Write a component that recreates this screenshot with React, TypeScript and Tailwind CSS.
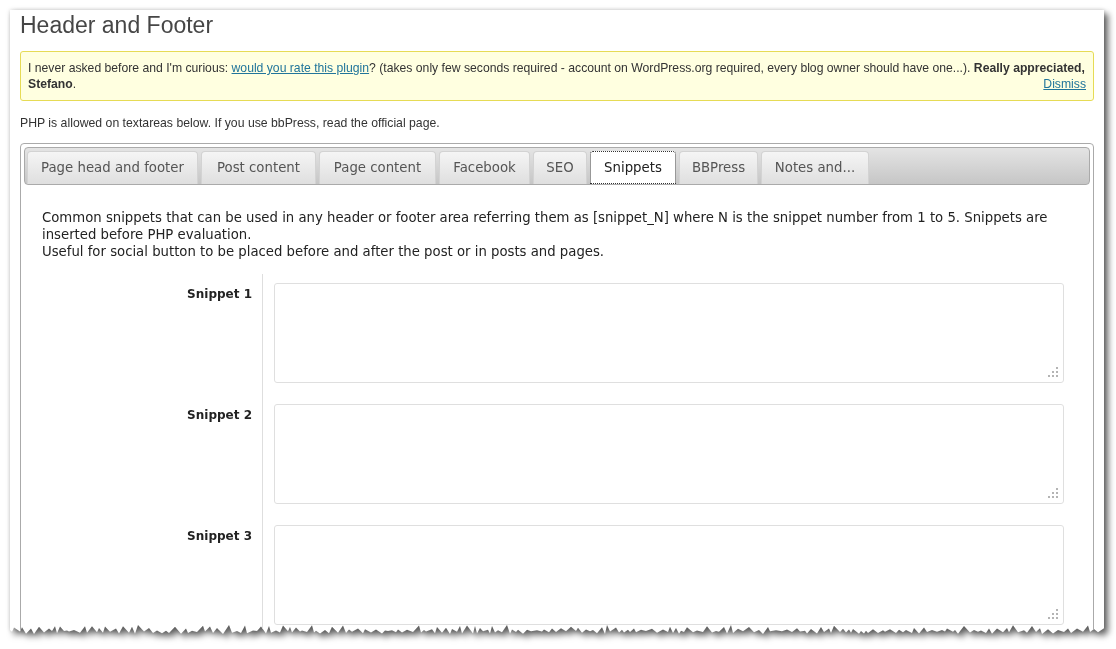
import React from "react";

const tabs = [
  { label: "Page head and footer", w: "w-[171px]" },
  { label: "Post content", w: "w-[115px]" },
  { label: "Page content", w: "w-[117px]" },
  { label: "Facebook", w: "w-[91px]" },
  { label: "SEO", w: "w-[54px]" },
  { label: "Snippets", w: "w-[86px]", active: true },
  { label: "BBPress", w: "w-[79px]" },
  { label: "Notes and...", w: "w-[108px]" },
];

// torn paper bottom edge, generated once
const PAPER_H = 624;
const tornEdge = (() => {
  let seed = 23;
  const rnd = () => {
    seed = (seed * 9301 + 49297) % 233280;
    return seed / 233280;
  };
  const pts: string[] = ["0 0", "100% 0", `100% ${PAPER_H - 6}px`];
  let x = 1094;
  let up = true;
  while (x > 0) {
    const big = rnd() > 0.6;
    const y = up
      ? PAPER_H - (big ? 6 : 3) - rnd() * 3
      : PAPER_H - rnd() * 3;
    pts.push(`${x}px ${y.toFixed(1)}px`);
    x -= 2 + Math.floor(rnd() * 5);
    up = !up;
  }
  pts.push(`0 ${PAPER_H - 4}px`);
  return `polygon(${pts.join(",")})`;
})();

function Grip() {
  return (
    <svg
      className="absolute right-[5px] bottom-[5px]"
      width="12"
      height="12"
      viewBox="0 0 12 12"
      fill="#b4b4b4"
    >
      <rect x="9" y="1" width="2" height="2" />
      <rect x="5" y="5" width="2" height="2" />
      <rect x="9" y="5" width="2" height="2" />
      <rect x="1" y="9" width="2" height="2" />
      <rect x="5" y="9" width="2" height="2" />
      <rect x="9" y="9" width="2" height="2" />
    </svg>
  );
}

export default function App() {
  return (
    <div className="h-[649px] w-[1116px] overflow-hidden bg-white font-['Liberation_Sans',Arial,sans-serif] text-[#333]">
      <div className="pl-[10px] pt-[10px] [filter:drop-shadow(0_0_2px_rgba(0,0,0,0.18))_drop-shadow(4px_4px_3px_rgba(0,0,0,0.6))]">
        <div
          className="flex h-[624px] w-[1094px] flex-col overflow-hidden bg-white px-[10px]"
          style={{ clipPath: tornEdge }}
        >
          {/* Title */}
          <h2 className="mt-[1px] text-[23px] leading-[29px] font-normal text-[#464646]">
            Header and Footer
          </h2>

          {/* Rate notice */}
          <div className="mt-[11px] rounded-[3px] border border-[#e6db55] bg-[#ffffe0] px-[7px] py-[8px] text-[12.2px] leading-[16px] text-[#333]">
            <div className="whitespace-nowrap">
              I never asked before and I'm curious:{" "}
              <a href="#" className="text-[#21759b] underline">
                would you rate this plugin
              </a>
              ? (takes only few seconds required - account on WordPress.org
              required, every blog owner should have one...).{" "}
              <b>Really appreciated,</b>
            </div>
            <div className="flex justify-between">
              <span>
                <b>Stefano</b>.
              </span>
              <a href="#" className="text-[#21759b] underline">
                Dismiss
              </a>
            </div>
          </div>

          <p className="mt-[14px] text-[12.25px] leading-[16px] text-[#333]">
            PHP is allowed on textareas below. If you use bbPress, read the
            official page.
          </p>

          {/* Tabs */}
          <div className="mt-[12px] h-[520px] shrink-0 rounded-[4px] border border-[#aaa] p-[3px] font-['DejaVu_Sans',Verdana,sans-serif]">
            <div className="flex h-[38px] items-end gap-[3px] rounded-[4px] border border-[#aaa] bg-linear-to-b from-[#e4e4e4] to-[#c6c6c6] pt-[3px] pl-[2px]">
              {tabs.map((t) =>
                t.active ? (
                  <div
                    key={t.label}
                    className={`${t.w} flex h-[33px] items-center justify-center rounded-t-[3px] border border-dotted border-[#333] bg-white text-[13.3px] text-[#212121]`}
                  >
                    {t.label}
                  </div>
                ) : (
                  <div
                    key={t.label}
                    className={`${t.w} flex h-[33px] items-center justify-center rounded-t-[4px] border border-b-0 border-[#d3d3d3] bg-linear-to-b from-[#f5f5f5] to-[#dfdfdf] text-[13.3px] text-[#555]`}
                  >
                    {t.label}
                  </div>
                )
              )}
            </div>

            <div className="px-[18px] pt-[24px] text-[13.25px] leading-[17px] text-[#222]">
              <p className="whitespace-nowrap">
                Common snippets that can be used in any header or footer area
                referring them as [snippet_N] where N is the snippet number from
                1 to 5. Snippets are
              </p>
              <p>inserted before PHP evaluation.</p>
              <p>Useful for social button to be placed before and after the post or in posts and pages.</p>

              <div className="mt-[14px]">
                {[1, 2, 3].map((n) => (
                  <div key={n} className="flex">
                    <div className="w-[220px] shrink-0 pt-[12px] pr-[10px] text-right text-[12px] font-bold text-[#222]">
                      Snippet {n}
                    </div>
                    <div className="border-l border-[#dedede] pt-[9px] pb-[12px] pl-[11px]">
                      <div className="relative">
                        <textarea className="block h-[100px] w-[790px] resize-none rounded-[3px] border border-[#dfdfdf] bg-white outline-none" />
                        <Grip />
                      </div>
                    </div>
                  </div>
                ))}
              </div>
            </div>
          </div>
        </div>
      </div>
    </div>
  );
}
